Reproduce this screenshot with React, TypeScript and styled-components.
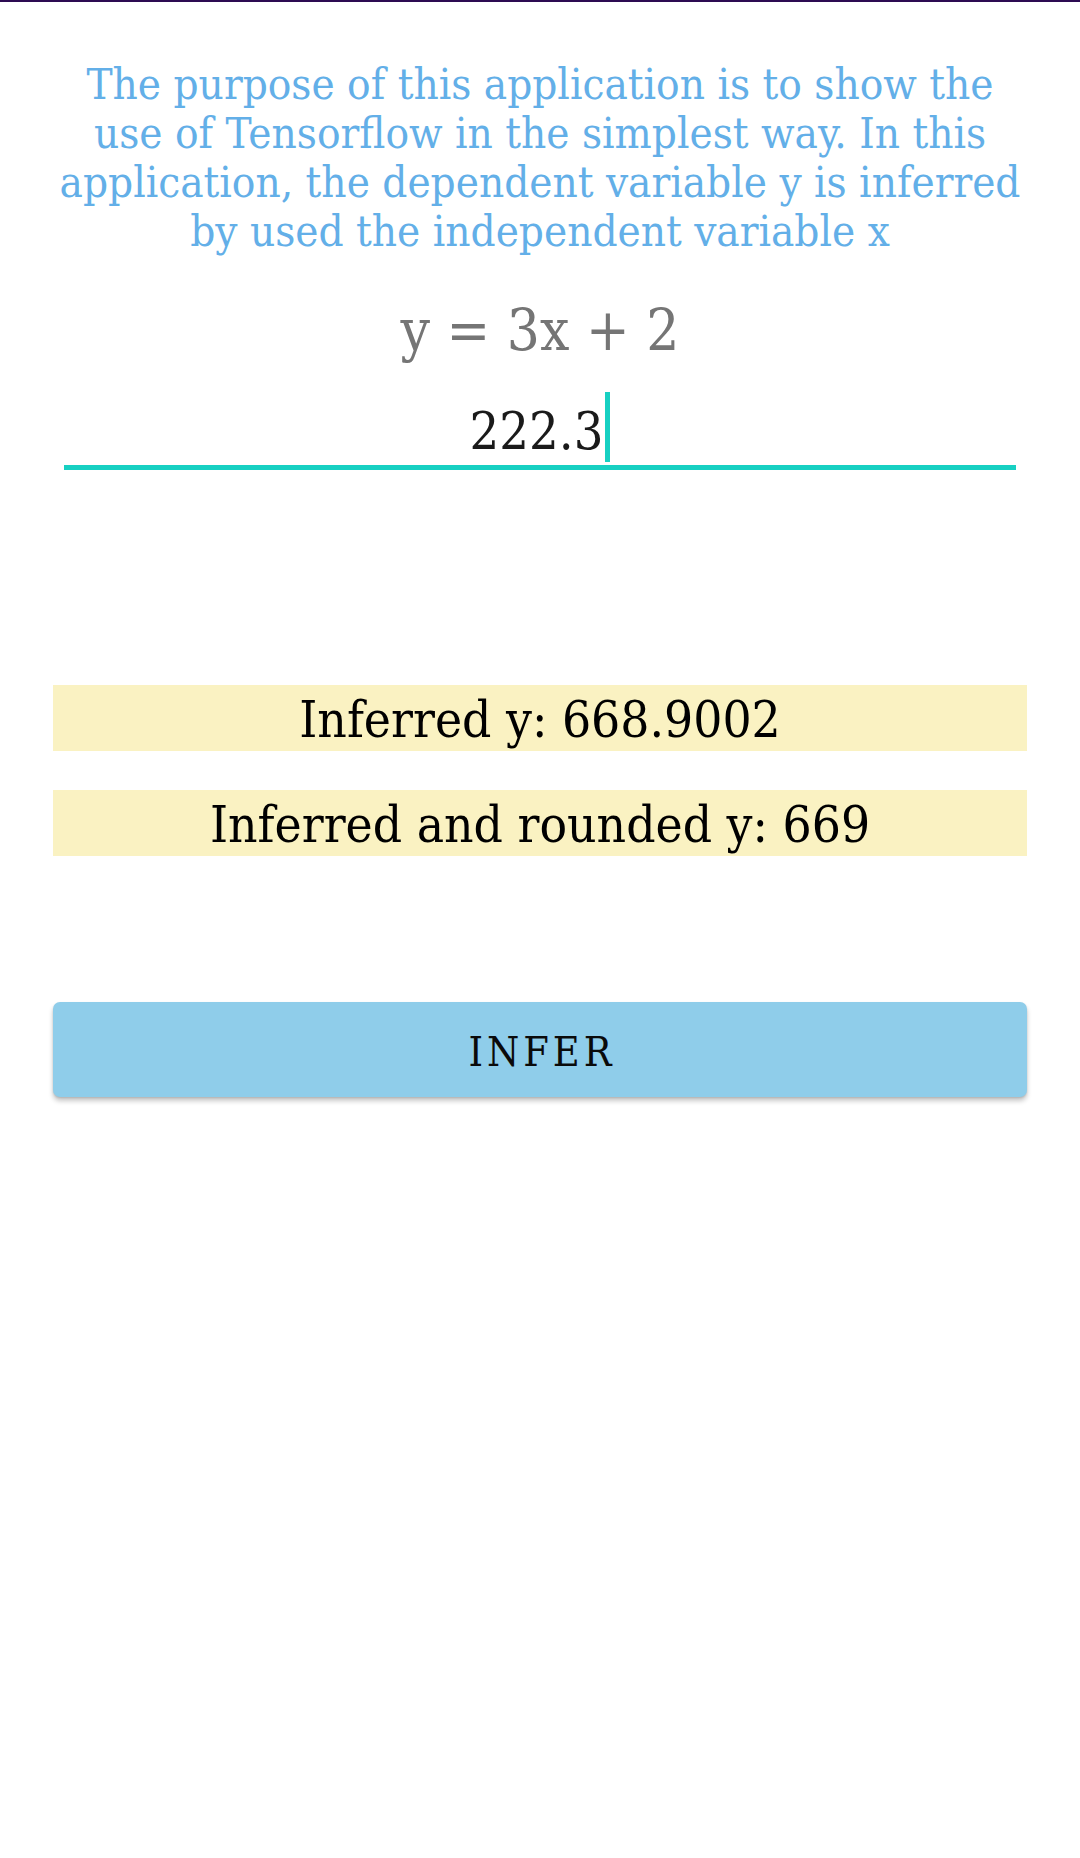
import React from "react";
import styled, { createGlobalStyle } from "styled-components";

const GlobalStyle = createGlobalStyle`
  html, body {
    margin: 0;
    padding: 0;
    background: #ffffff;
  }
  body {
    font-family: "DejaVu Serif Condensed", "DejaVu Serif", serif;
    font-stretch: condensed;
  }
`;

const Screen = styled.div`
  width: 1080px;
  min-height: 1858px;
  background: #ffffff;
  border-top: 2px solid #2d0b52;
  box-sizing: border-box;
  display: flex;
  flex-direction: column;
  align-items: center;
`;

const Intro = styled.p`
  margin: 58px 0 0;
  width: 980px;
  text-align: center;
  color: #63afe8;
  font-size: 43.6px;
  line-height: 49px;
`;

const Equation = styled.div`
  margin-top: 38px;
  color: #757575;
  font-size: 58px;
  line-height: 72px;
  text-align: center;
`;

const Field = styled.div`
  margin-top: 26px;
  width: 952px;
  height: 70px;
  padding-bottom: 3px;
  border-bottom: 5px solid #17d0c2;
  display: flex;
  justify-content: center;
  align-items: flex-end;
`;

const FieldValue = styled.span`
  color: #1a1a1a;
  font-size: 52px;
  line-height: 62px;
`;

const Cursor = styled.span`
  align-self: stretch;
  width: 5px;
  margin-left: 2px;
  background: #17d0c2;
`;

const ResultBox = styled.div<{ $top: number }>`
  margin-top: ${(p) => p.$top}px;
  width: 974px;
  height: 66px;
  box-sizing: border-box;
  padding-top: 4px;
  background: #faf2c2;
  color: #000000;
  font-size: 51px;
  line-height: 62px;
  text-align: center;
`;

const InferButton = styled.button`
  margin-top: 146px;
  width: 974px;
  height: 95px;
  border: none;
  border-radius: 7px;
  background: #8fcdea;
  box-shadow: 0 4px 5px rgba(0, 0, 0, 0.22), 0 1px 2px rgba(0, 0, 0, 0.12);
  color: #0a0a0a;
  font-family: "DejaVu Serif Condensed", "DejaVu Serif", serif;
  font-stretch: condensed;
  font-size: 41px;
  letter-spacing: 4px;
  padding: 4px 0 0 4px;
  cursor: pointer;
`;

export default function App() {
  return (
    <>
      <GlobalStyle />
      <Screen>
        <Intro>
          The purpose of this application is to show the use of Tensorflow in
          the simplest way. In this application, the dependent variable y is
          inferred by used the independent variable x
        </Intro>
        <Equation>y = 3x + 2</Equation>
        <Field>
          <FieldValue>222.3</FieldValue>
          <Cursor />
        </Field>
        <ResultBox $top={215}>Inferred y: 668.9002</ResultBox>
        <ResultBox $top={39}>Inferred and rounded y: 669</ResultBox>
        <InferButton>INFER</InferButton>
      </Screen>
    </>
  );
}
